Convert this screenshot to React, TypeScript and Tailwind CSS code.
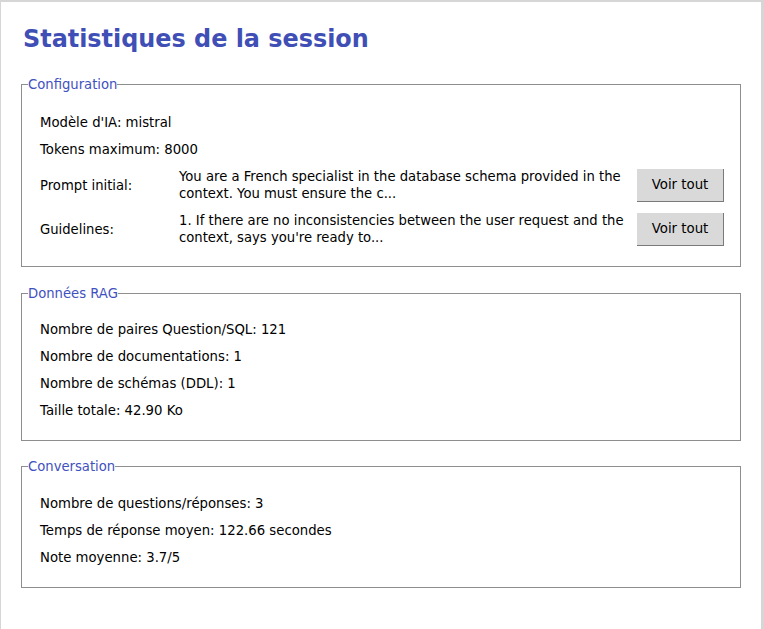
const font = { fontFamily: '"DejaVu Sans", "Liberation Sans", sans-serif' };

const Section = ({ title, children, className }: { title: string; children: React.ReactNode; className?: string }) => (
  <fieldset className={`border border-[#8e8e8e] pl-[6px] pr-[5px] ${className ?? ""}`}>
    <legend className="text-[13.2px] leading-[15px] text-[#3f51c0]">{title}</legend>
    <div className="pl-[12px] pr-[11px]">{children}</div>
  </fieldset>
);

const Row = ({ children }: { children: React.ReactNode }) => (
  <div className="h-[27px] flex items-center text-[13.25px] leading-[15px] text-black">{children}</div>
);

const LongRow = ({ label, text }: { label: string; text: string }) => (
  <div className="h-[44px] flex items-center text-[13.2px] text-black">
    <div className="w-[139px] shrink-0 leading-[15px]">{label}</div>
    <div className="flex-1 leading-[17px] pr-[4px]">{text}</div>
    <button className="w-[87px] h-[33px] shrink-0 bg-[#d9d9d9] border-r border-b border-[#7a7a7a] text-[13.33px]">
      Voir tout
    </button>
  </div>
);

export default function App() {
  return (
    <div style={font} className="w-[764px] h-[629px] bg-white border-t-2 border-l border-r-[3px] border-[#d6d6d6] px-[20px] overflow-hidden">
      <h1 className="pt-[22px] pl-[2px] text-[23.9px] leading-[30px] font-bold text-[#3f4fb5]">Statistiques de la session</h1>

      <Section title="Configuration" className="mt-[23px] pt-[17px] pb-[15px]">
        <Row>Modèle d'IA: mistral</Row>
        <Row>Tokens maximum: 8000</Row>
        <LongRow
          label="Prompt initial:"
          text="You are a French specialist in the database schema provided in the context. You must ensure the c..."
        />
        <LongRow
          label="Guidelines:"
          text="1. If there are no inconsistencies between the user request and the context, says you're ready to..."
        />
      </Section>

      <Section title="Données RAG" className="mt-[19px] pt-[15px] pb-[16px]">
        <Row>Nombre de paires Question/SQL: 121</Row>
        <Row>Nombre de documentations: 1</Row>
        <Row>Nombre de schémas (DDL): 1</Row>
        <Row>Taille totale: 42.90 Ko</Row>
      </Section>

      <Section title="Conversation" className="mt-[18px] pt-[16px] pb-[16px]">
        <Row>Nombre de questions/réponses: 3</Row>
        <Row>Temps de réponse moyen: 122.66 secondes</Row>
        <Row>Note moyenne: 3.7/5</Row>
      </Section>
    </div>
  );
}
